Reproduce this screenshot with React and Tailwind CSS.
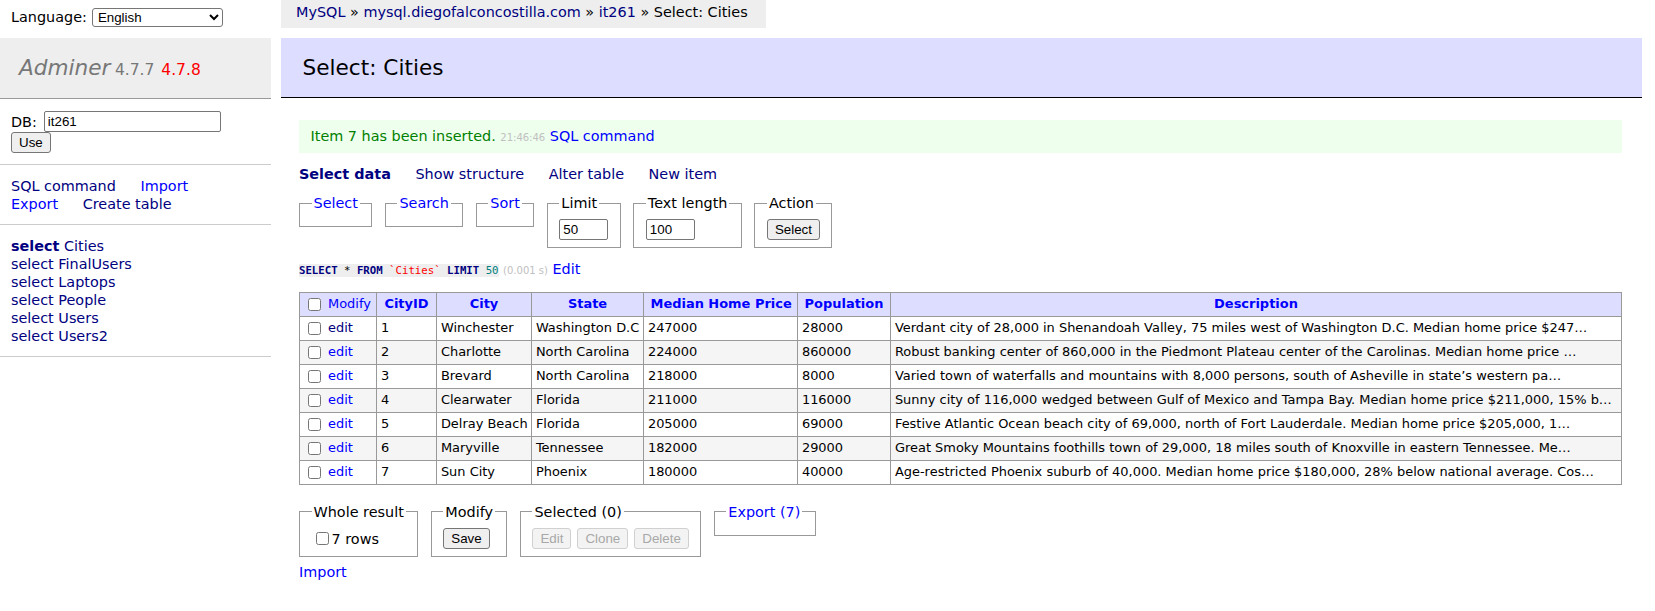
import React from 'react';

const rows = [
  [1, 'Winchester', 'Washington D.C', '247000', '28000', 'Verdant city of 28,000 in Shenandoah Valley, 75 miles west of Washington D.C. Median home price $247…'],
  [2, 'Charlotte', 'North Carolina', '224000', '860000', 'Robust banking center of 860,000 in the Piedmont Plateau center of the Carolinas. Median home price …'],
  [3, 'Brevard', 'North Carolina', '218000', '8000', 'Varied town of waterfalls and mountains with 8,000 persons, south of Asheville in state’s western pa…'],
  [4, 'Clearwater', 'Florida', '211000', '116000', 'Sunny city of 116,000 wedged between Gulf of Mexico and Tampa Bay. Median home price $211,000, 15% b…'],
  [5, 'Delray Beach', 'Florida', '205000', '69000', 'Festive Atlantic Ocean beach city of 69,000, north of Fort Lauderdale. Median home price $205,000, 1…'],
  [6, 'Maryville', 'Tennessee', '182000', '29000', 'Great Smoky Mountains foothills town of 29,000, 18 miles south of Knoxville in eastern Tennessee. Me…'],
  [7, 'Sun City', 'Phoenix', '180000', '40000', 'Age-restricted Phoenix suburb of 40,000. Median home price $180,000, 28% below national average. Cos…'],
];

const tables = ['Cities', 'FinalUsers', 'Laptops', 'People', 'Users', 'Users2'];

const control = "font-['Liberation_Sans',Arial,sans-serif] text-[13.33px]";
const btn = `${control} h-[21px] px-[7px] bg-[#efefef] border border-[#767676] rounded-[3px] leading-none`;
const btnOff = `${control} h-[21px] px-[7px] bg-[#f3f3f3] border border-[#d0d0d0] rounded-[3px] text-[#a8a8a8] leading-none`;
const textInput = `${control} h-[21px] bg-white border border-[#767676] rounded-[2px] px-[3px]`;
const fieldset = 'border border-[#999] px-[11.5px] py-[7.2px]';
const legend = 'px-[2px] leading-[18px]';
const cell = 'border border-[#999] px-[3.9px] py-0 text-left whitespace-nowrap';
const head = 'border border-[#999] bg-[#ddf] px-[6.5px] py-0 text-center whitespace-nowrap';

function Sidebar() {
  return (
    <div className="w-[271px] shrink-0">
      {/* Language picker */}
      <div className="h-[38px] pl-[11px] pt-[8px] flex items-start gap-[5px]">
        <span className="leading-[19px]">Language:</span>
        <select className={`${control} h-[19px] w-[131px] bg-white border border-[#767676] rounded-[3px] pl-[1px]`} defaultValue="en">
          <option value="en">English</option>
        </select>
      </div>

      <div className="h-[61px] bg-[#eee] border-b border-[#999] pl-[19px] pt-[16px] leading-[27px]">
        <span className="italic text-[#777] text-[21.6px]">Adminer</span>{' '}
        <span className="text-[15.5px] text-[#777]">
          4.7.7 <span className="ml-[2px] text-[#f00]">4.7.8</span>
        </span>
      </div>

      <div className="border-b border-[#ccc] pl-[11px] pt-[12px] pb-[11px]">
        <div className="flex items-center h-[21px]">
          <span>DB:</span>
          <input className={`${textInput} ml-[7px] w-[177px]`} defaultValue="it261" />
        </div>
        <button className={`${btn} h-[20px]`}>Use</button>
      </div>

      <div className="border-b border-[#ccc] pl-[11px] pr-[14px] py-[11.5px]">
        <a className="text-[#000080] mr-5">SQL command</a>{' '}
        <a className="text-[#00f] mr-5">Import</a>{' '}
        <a className="text-[#00f] mr-5">Export</a>{' '}
        <a className="text-[#000080] mr-5">Create table</a>
      </div>

      <ul className="border-b border-[#ccc] pl-[11px] py-[11.5px]">
        {tables.map((t, i) => (
          <li key={t} className="text-[#000080]">
            <a className={i === 0 ? 'font-bold' : ''}>select</a> <a>{t}</a>
          </li>
        ))}
      </ul>
    </div>
  );
}

function Main() {
  return (
    <div className="ml-[10px] w-[1361px]">
      {/* Breadcrumb */}
      <div className="w-fit h-[28px] bg-[#eee] pl-[15px] pr-[18px] leading-[25px] whitespace-nowrap">
        <a className="text-[#000080]">MySQL</a> » <a className="text-[#000080]">mysql.diegofalconcostilla.com</a> »{' '}
        <a className="text-[#000080]">it261</a> » Select: Cities
      </div>

      <h2 className="mt-[10px] h-[60px] bg-[#ddf] border-b border-black pl-[21.6px] pt-[16px] leading-[27px] text-[21.6px]">
        Select: Cities
      </h2>

      <div className="pl-[18px] pr-[20px]">
        <div className="mt-[22px] bg-[#efe] text-[green] px-[11.5px] py-[6.5px]">
          Item 7 has been inserted. <span className="text-[silver] text-[10px]">21:46:46</span>{' '}
          <a className="text-[#00f]">SQL command</a>
        </div>

        <div className="mt-[11.5px] text-[#000080]">
          <a className="font-bold mr-5">Select data</a>{' '}
          <a className="mr-5">Show structure</a>{' '}
          <a className="mr-5">Alter table</a>{' '}
          <a className="mr-5">New item</a>
        </div>

        {/* Filter fieldsets */}
        <div className="mt-[11.5px] flex items-start gap-[12.5px]">
          {['Select', 'Search', 'Sort'].map((l) => (
            <fieldset key={l} className={fieldset}>
              <legend className={`${legend} text-[#00f]`}>{l}</legend>
            </fieldset>
          ))}
          <fieldset className={fieldset}>
            <legend className={legend}>Limit</legend>
            <input className={`${textInput} w-[49px]`} defaultValue="50" />
          </fieldset>
          <fieldset className={fieldset}>
            <legend className={legend}>Text length</legend>
            <input className={`${textInput} w-[49px]`} defaultValue="100" />
          </fieldset>
          <fieldset className={fieldset}>
            <legend className={legend}>Action</legend>
            <button className={btn}>Select</button>
          </fieldset>
        </div>

        <p className="mt-[11.5px]">
          <code className="bg-[#eee] font-['DejaVu_Sans_Mono',monospace] text-[10.7px]">
            <span className="font-bold text-[#000080]">SELECT</span> * <span className="font-bold text-[#000080]">FROM</span>{' '}
            <span className="text-[#f00]">`Cities`</span> <span className="font-bold text-[#000080]">LIMIT</span>{' '}
            <span className="text-[#007f7f]">50</span>
          </code>{' '}
          <span className="text-[silver] text-[10px]">(0.001 s)</span> <a className="text-[#00f]">Edit</a>
        </p>

        <table className="mt-[12px] border-collapse table-fixed w-[1322px] text-[12.96px] leading-[16.2px]">
          <colgroup>
            <col className="w-[77px]" />
            <col className="w-[60px]" />
            <col className="w-[95px]" />
            <col className="w-[112px]" />
            <col className="w-[154px]" />
            <col className="w-[93px]" />
            <col className="w-[731px]" />
          </colgroup>
          <thead>
            <tr className="h-[24px]">
              <td className={`${cell} bg-[#ddf]`}>
                <input type="checkbox" className="ml-[4px] mr-[3px] align-middle" />{' '}
                <a className="text-[#00f]">Modify</a>
              </td>
              {['CityID', 'City', 'State', 'Median Home Price', 'Population', 'Description'].map((h) => (
                <th key={h} className={head}>
                  <a className="text-[#00f] font-bold">{h}</a>
                </th>
              ))}
            </tr>
          </thead>
          <tbody>
            {rows.map((r, i) => (
              <tr key={r[0]} className={`h-[24px] ${i % 2 === 1 ? 'bg-[#f5f5f5]' : ''}`}>
                <td className={cell}>
                  <input type="checkbox" className="ml-[4px] mr-[3px] align-middle" />{' '}
                  <a className={i === 0 ? 'text-[#000080]' : 'text-[#00f]'}>edit</a>
                </td>
                <td className={cell}>{r[0]}</td>
                <td className={cell}>{r[1]}</td>
                <td className={cell}>{r[2]}</td>
                <td className={cell}>{r[3]}</td>
                <td className={cell}>{r[4]}</td>
                <td className={`${cell} overflow-hidden`}>{r[5]}</td>
              </tr>
            ))}
          </tbody>
        </table>

        {/* Footer actions */}
        <div className="mt-[18px] flex items-start gap-[12.5px]">
          <fieldset className={fieldset}>
            <legend className={legend}>Whole result</legend>
            <label className="flex items-center h-[21px]">
              <input type="checkbox" className="ml-[4px] mr-[3px]" />7 rows
            </label>
          </fieldset>
          <fieldset className={`${fieldset} min-w-[74px]`}>
            <legend className={legend}>Modify</legend>
            <button className={btn}>Save</button>
          </fieldset>
          <fieldset className={`${fieldset} min-w-[179px]`}>
            <legend className={legend}>Selected (0)</legend>
            <div className="flex gap-[6px]">
              <button className={btnOff} disabled>Edit</button>
              <button className={btnOff} disabled>Clone</button>
              <button className={btnOff} disabled>Delete</button>
            </div>
          </fieldset>
          <fieldset className={`${fieldset} min-w-[102px]`}>
            <legend className={`${legend} text-[#00f]`}>Export (7)</legend>
          </fieldset>
        </div>

        <p className="mt-[6px]">
          <a className="text-[#00f]">Import</a>
        </p>
      </div>
    </div>
  );
}

export default function App() {
  return (
    <div className="flex min-h-[611px] bg-white text-black font-['DejaVu_Sans',Verdana,sans-serif] text-[14.4px] leading-[18px]">
      <Sidebar />
      <Main />
    </div>
  );
}
